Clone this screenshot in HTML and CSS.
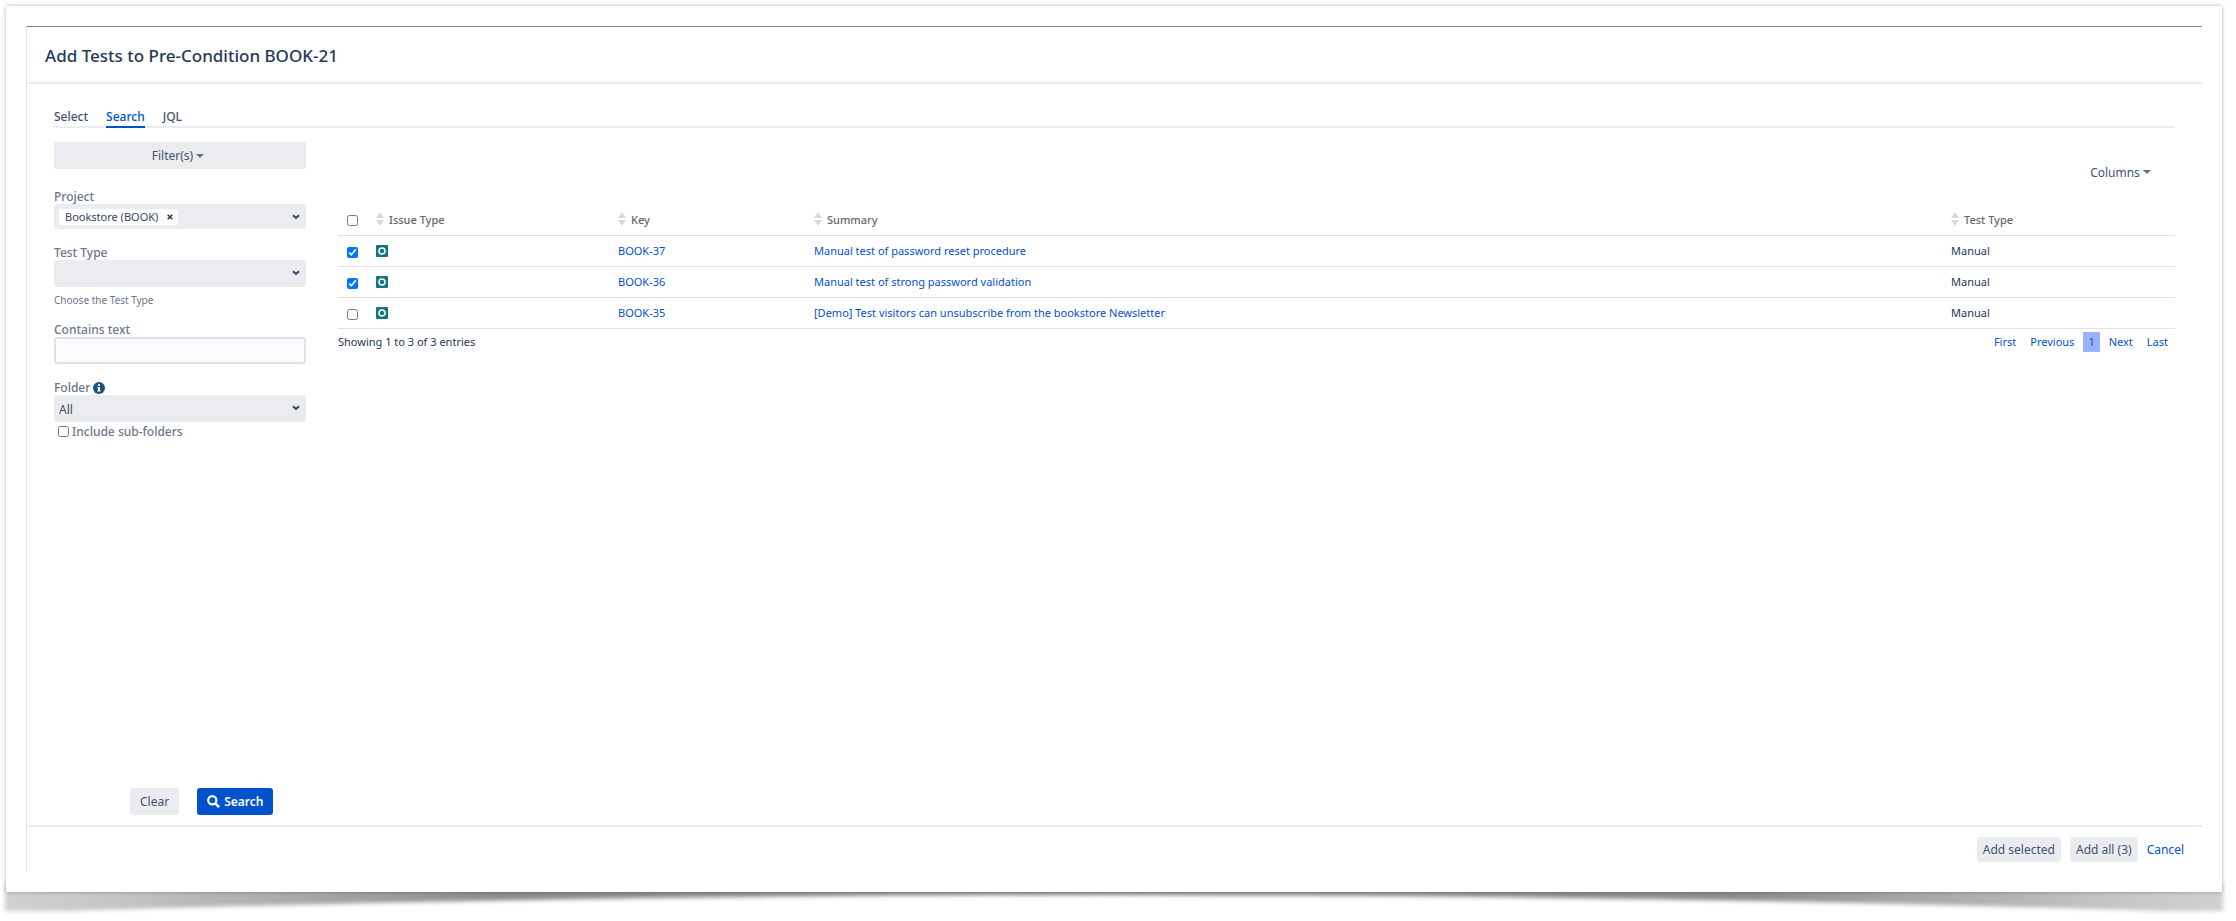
FILE: index.html
```html
<!DOCTYPE html>
<html lang="en">
<head>
    <meta charset="UTF-8">
    <meta name="viewport" content="width=device-width, initial-scale=1.0">
    <title>Add Tests to Pre-Condition BOOK-21</title>
    <link rel="stylesheet" href="styles.css">
</head>
<body>

<!-- shared icons -->
<svg class="sprite" width="0" height="0" aria-hidden="true">
    <symbol id="chevron" viewBox="0 0 8 6"><path d="M1 1.2 4 4l3-2.8" fill="none" stroke="#344563" stroke-width="2"/></symbol>
    <symbol id="caret" viewBox="0 0 8 4"><path d="M0 0h8L4 4z" fill="#6b6b6b"/></symbol>
    <symbol id="sort" viewBox="0 0 8 14"><path d="M4 0l4 6H0zM0 8h8l-4 6z" fill="#d9d9d9"/></symbol>
    <symbol id="test" viewBox="0 0 12 12"><rect width="12" height="12" rx="1" fill="#14757f"/><circle cx="6" cy="6" r="3" fill="none" stroke="#fff" stroke-width="1.6"/></symbol>
</svg>

<div class="sheet">
    <div class="dialog">
        <header class="dialog-header">
            <h1>Add Tests to Pre-Condition BOOK-21</h1>
        </header>

        <main class="dialog-body">
            <nav class="tabs">
                <a href="#select">Select</a>
                <a href="#search" class="active">Search</a>
                <a href="#jql">JQL</a>
            </nav>

            <div class="columns">
                <form class="filters">
                    <button type="button" class="btn filter-btn">Filter(s) <svg class="caret"><use href="#caret"/></svg></button>

                    <div class="field">
                        <label for="project">Project</label>
                        <div class="multi-select">
                            <span class="chip">Bookstore (BOOK)
                                <button type="button" class="chip-remove" aria-label="Remove Bookstore">
                                    <svg width="6" height="6" viewBox="0 0 6 6"><path d="M.7.7l4.6 4.6M5.3.7L.7 5.3" stroke="#253858" stroke-width="1.6"/></svg>
                                </button>
                            </span>
                            <input type="text" id="project">
                            <svg class="chevron"><use href="#chevron"/></svg>
                        </div>
                    </div>

                    <div class="field">
                        <label for="test-type">Test Type</label>
                        <div class="select">
                            <select id="test-type"><option></option><option>Manual</option></select>
                            <svg class="chevron"><use href="#chevron"/></svg>
                        </div>
                        <p class="help">Choose the Test Type</p>
                    </div>

                    <div class="field">
                        <label for="contains">Contains text</label>
                        <input type="text" id="contains" class="text-input">
                    </div>

                    <div class="field">
                        <label for="folder">Folder
                            <svg class="info" viewBox="0 0 12 12"><circle cx="6" cy="6" r="6" fill="#205081"/><path d="M5 2.2h2V4H5zM4.4 5H7v3.4h.7v1.2H4.3V8.4H5V6.2h-.6z" fill="#fff"/></svg>
                        </label>
                        <div class="select">
                            <select id="folder"><option>All</option></select>
                            <svg class="chevron"><use href="#chevron"/></svg>
                        </div>
                        <div class="checkbox">
                            <input type="checkbox" id="subfolders">
                            <label for="subfolders">Include sub-folders</label>
                        </div>
                    </div>

                    <div class="filter-actions">
                        <button type="reset" class="btn">Clear</button>
                        <button type="button" class="btn btn-primary">
                            <svg width="13" height="13" viewBox="0 0 13 13"><circle cx="5.3" cy="5.3" r="4.1" fill="none" stroke="#fff" stroke-width="2.2"/><path d="M8.3 8.3l3.8 3.8" stroke="#fff" stroke-width="2.6"/></svg>
                            Search
                        </button>
                    </div>
                </form>

                <section class="results">
                    <div class="toolbar">
                        <button type="button" class="columns-btn">Columns <svg class="caret"><use href="#caret"/></svg></button>
                    </div>

                    <table class="issues">
                        <colgroup>
                            <col class="col-check">
                            <col class="col-type">
                            <col class="col-key">
                            <col>
                            <col class="col-test">
                        </colgroup>
                        <thead>
                            <tr>
                                <th><input type="checkbox" aria-label="Select all"></th>
                                <th><svg class="sort"><use href="#sort"/></svg>Issue Type</th>
                                <th><svg class="sort"><use href="#sort"/></svg>Key</th>
                                <th><svg class="sort"><use href="#sort"/></svg>Summary</th>
                                <th><svg class="sort"><use href="#sort"/></svg>Test Type</th>
                            </tr>
                        </thead>
                        <tbody>
                            <tr>
                                <td><input type="checkbox" aria-label="BOOK-37" checked></td>
                                <td><svg class="type"><use href="#test"/></svg></td>
                                <td><a href="#BOOK-37">BOOK-37</a></td>
                                <td><a href="#BOOK-37">Manual test of password reset procedure</a></td>
                                <td>Manual</td>
                            </tr>
                            <tr>
                                <td><input type="checkbox" aria-label="BOOK-36" checked></td>
                                <td><svg class="type"><use href="#test"/></svg></td>
                                <td><a href="#BOOK-36">BOOK-36</a></td>
                                <td><a href="#BOOK-36">Manual test of strong password validation</a></td>
                                <td>Manual</td>
                            </tr>
                            <tr>
                                <td><input type="checkbox" aria-label="BOOK-35"></td>
                                <td><svg class="type"><use href="#test"/></svg></td>
                                <td><a href="#BOOK-35">BOOK-35</a></td>
                                <td><a href="#BOOK-35">[Demo] Test visitors can unsubscribe from the bookstore Newsletter</a></td>
                                <td>Manual</td>
                            </tr>
                        </tbody>
                    </table>

                    <div class="table-footer">
                        <span>Showing 1 to 3 of 3 entries</span>
                        <nav class="pagination">
                            <a href="#first">First</a>
                            <a href="#previous">Previous</a>
                            <a href="#page-1" class="current">1</a>
                            <a href="#next">Next</a>
                            <a href="#last">Last</a>
                        </nav>
                    </div>
                </section>
            </div>
        </main>

        <footer class="dialog-footer">
            <button type="button" class="btn">Add selected</button>
            <button type="button" class="btn">Add all (3)</button>
            <a href="#cancel">Cancel</a>
        </footer>
    </div>
</div>

<!-- curled shadow below the sheet -->
<svg class="curl" viewBox="0 0 2216 29" preserveAspectRatio="none" aria-hidden="true">
    <defs>
        <linearGradient id="curl-fill">
            <stop offset="0" stop-color="#d0d0d0"/>
            <stop offset="0.04" stop-color="#c8c8c8"/>
            <stop offset="0.12" stop-color="#adadad"/>
            <stop offset="0.22" stop-color="#8c8c8c"/>
            <stop offset="0.5" stop-color="#8c8c8c"/>
            <stop offset="0.78" stop-color="#8c8c8c"/>
            <stop offset="0.88" stop-color="#adadad"/>
            <stop offset="0.96" stop-color="#c8c8c8"/>
            <stop offset="1" stop-color="#d0d0d0"/>
        </linearGradient>
    </defs>
    <path d="M-1-8V19H60Q1108-13 2156 19H2217V-8z" fill="url(#curl-fill)"/>
</svg>

</body>
</html>
```

FILE: styles.css
```css
* {
    box-sizing: border-box;
}
body {
    display: flex;
    flex-direction: column;
    min-height: 100vh;
    margin: 0;
    padding: 6px 14px 0 6px;
    background-color: #fff;
    color: #253858;
    font-family: "Noto Sans", "Open Sans", sans-serif;
    font-size: 12px;
    line-height: 16px;
    overflow-x: hidden;
}
a {
    color: #0052cc;
    text-decoration: none;
}
button, input, select {
    font: inherit;
    color: inherit;
}
input[type="checkbox"] {
    width: 11px;
    height: 11px;
    margin: 0;
    vertical-align: middle;
}
.sprite {
    position: absolute;
}

/* page sheet */
.sheet {
    position: relative;
    z-index: 1;
    display: flex;
    flex: 1;
    padding: 20px;
    background-color: #fff;
    box-shadow: 0 0 4px rgba(0, 0, 0, 0.3);
}
.curl {
    display: block;
    width: 100%;
    height: 29px;
    overflow: visible;
    filter: blur(2px);
}

/* dialog */
.dialog {
    display: flex;
    flex: 1;
    flex-direction: column;
    border-top: 1px solid #7a869a;
    border-left: 1px solid #e4e5ea;
}
.dialog-header {
    padding: 17px 18px 14px;
    border-bottom: 2px solid #ebecf0;
}
.dialog-header h1 {
    margin: 0;
    font-size: 17px;
    font-weight: 500;
    line-height: 24px;
}
.dialog-body {
    display: flex;
    flex: 1;
    flex-direction: column;
    padding: 25px 27px 10px;
}
.tabs {
    display: flex;
    gap: 18px;
    border-bottom: 2px solid #ebecf0;
}
.tabs a {
    margin-bottom: -2px;
    padding-bottom: 1px;
    border-bottom: 2px solid transparent;
    color: #42526e;
    font-weight: 500;
}
.tabs .active {
    border-color: #0052cc;
    color: #0052cc;
}
.columns {
    display: flex;
    flex: 1;
    gap: 32px;
    padding-top: 14px;
}

/* filters */
.filters {
    display: flex;
    flex-direction: column;
    gap: 15px;
    width: 252px;
}
.btn {
    height: 27px;
    padding: 0 10px;
    border: none;
    border-radius: 3px;
    background-color: #ebecf0;
    color: #42526e;
    cursor: pointer;
}
.btn:hover {
    background-color: #dfe1e6;
}
.btn-primary, .btn-primary:hover {
    display: flex;
    align-items: center;
    gap: 4px;
    background-color: #0052cc;
    color: #fff;
    font-weight: 600;
}
.filter-btn {
    margin-bottom: 4px;
    padding: 0 14px 0 10px;
}
.caret {
    width: 8px;
    height: 4px;
    vertical-align: middle;
}
.field {
    color: #6b778c;
}
.field label {
    display: block;
    height: 16px;
    font-weight: 500;
    line-height: 18px;
}
.select, .multi-select {
    position: relative;
    color: #42526e;
}
.select select {
    display: block;
    width: 100%;
    height: 27px;
    padding: 2px 5px 0;
    border: none;
    border-radius: 3px;
    background-color: #ebecf0;
    appearance: none;
}
.chevron {
    position: absolute;
    top: 10px;
    right: 6px;
    width: 8px;
    height: 6px;
    pointer-events: none;
}
.multi-select {
    display: flex;
    align-items: center;
    height: 25px;
    padding: 0 5px;
    border-radius: 3px;
    background-color: #ebecf0;
}
.multi-select input {
    flex: 1;
    min-width: 0;
    border: none;
    outline: none;
    background: none;
}
.chip {
    display: flex;
    align-items: center;
    gap: 9px;
    padding: 0 5px 0 6px;
    border-radius: 2px;
    background-color: #fff;
    color: #344563;
    font-size: 11px;
}
.chip-remove {
    display: flex;
    padding: 0;
    border: none;
    background: none;
    cursor: pointer;
}
.help {
    margin: 8px 0 0;
    font-size: 10px;
    line-height: 11px;
}
.text-input {
    display: block;
    width: 100%;
    height: 27px;
    padding: 0 5px;
    border: 2px solid #dfe1e6;
    border-radius: 3px;
    background-color: #fafbfc;
}
.info {
    width: 12px;
    height: 12px;
    vertical-align: -2px;
}
.checkbox {
    display: flex;
    align-items: center;
    gap: 3px;
    padding: 1px 0 0 4px;
}
.filter-actions {
    display: flex;
    gap: 18px;
    margin-top: auto;
    padding-left: 76px;
}

/* results */
.results {
    flex: 1;
    min-width: 0;
}
.toolbar {
    display: flex;
    justify-content: flex-end;
    padding: 23px 24px;
}
.columns-btn {
    padding: 0;
    border: none;
    background: none;
    color: #42526e;
    line-height: 16px;
    cursor: pointer;
}
.columns-btn .caret {
    vertical-align: 3px;
}
.issues {
    width: 100%;
    border-collapse: collapse;
    table-layout: fixed;
    font-size: 11px;
}
.issues th, .issues td {
    height: 31px;
    padding: 1px 0 0;
    border-bottom: 1px solid #dfe1e6;
    text-align: left;
}
.issues th {
    color: #666;
    font-weight: 500;
}
.issues th:first-child, .issues td:first-child {
    padding-left: 9px;
}
.col-check {
    width: 38px;
}
.col-type {
    width: 242px;
}
.col-key {
    width: 196px;
}
.col-test {
    width: 224px;
}
.sort {
    width: 8px;
    height: 14px;
    margin-right: 5px;
    vertical-align: -2px;
}
.type {
    display: block;
    width: 12px;
    height: 12px;
}
.table-footer {
    display: flex;
    justify-content: space-between;
    padding-top: 3px;
    font-size: 11px;
    line-height: 20px;
}
.pagination {
    display: flex;
    gap: 4px;
    padding-right: 2px;
}
.pagination a {
    padding: 0 5px;
}
.pagination .current {
    background-color: #99b3ff;
}

/* footer */
.dialog-footer {
    display: flex;
    align-items: center;
    justify-content: flex-end;
    gap: 9px;
    padding: 10px 18px;
    border-top: 2px solid #ebecf0;
}
.dialog-footer .btn {
    height: 25px;
    padding: 0 6px;
}
```
